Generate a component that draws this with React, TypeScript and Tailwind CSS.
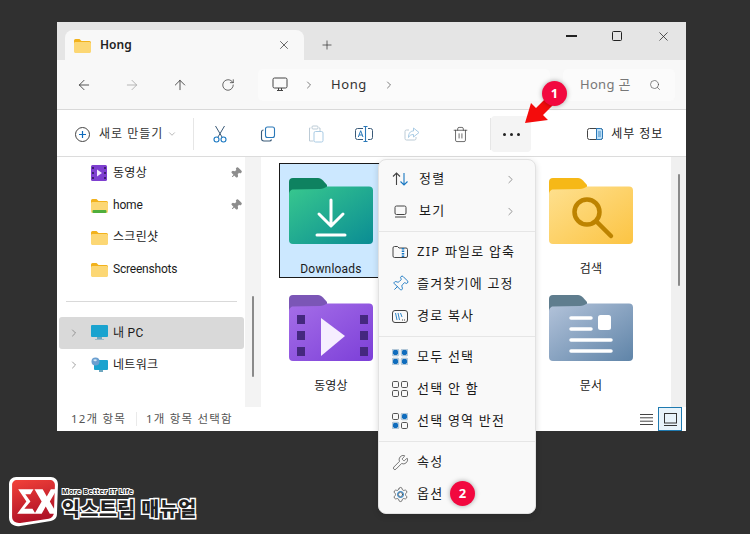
import React from "react";
import {
  ArrowLeft, ArrowRight, ArrowUp, RotateCw, ChevronRight, ChevronDown, X, Plus, Search, Trash2, Wrench, Settings, Pin,
} from "lucide-react";

function SmallFolder({ green }: { green?: boolean }) {
  return (
    <svg width="17" height="15" viewBox="0 0 17 15" className="shrink-0">
      <path d="M0 2.5a1.5 1.5 0 0 1 1.5-1.5h4l2 2h8a1.5 1.5 0 0 1 1.5 1.5V7H0z" fill="#f2b21c" />
      <path d="M0 5.5C0 4.7.7 4 1.5 4h14c.8 0 1.5.7 1.5 1.5v8c0 .8-.7 1.5-1.5 1.5h-14C.7 15 0 14.300 0 13.500z" fill="#fcd774" />
      {green && <rect x="1.500" y="12" width="14" height="3" rx="1" fill="#4fae3c" />}
    </svg>
  );
}

function BigFolder({ id, tab, from, to, children }: { id: string; tab: string; from: string; to: string; children?: React.ReactNode }) {
  return (
    <svg width="84" height="66" viewBox="0 0 84 66" className="shrink-0">
      <defs>
        <linearGradient id={id} x1="0" y1="0" x2="1" y2="1">
          <stop offset="0" stopColor={from} />
          <stop offset="1" stopColor={to} />
        </linearGradient>
      </defs>
      <path d="M0 4a4 4 0 0 1 4-4h25c2 0 3.500 1 5 2.500L38 7v11H0z" fill={tab} />
      <path d="M0 16c0-2 1-3 3-4.500L31 11c3 0 4.500-1 7-2.500h42a4 4 0 0 1 4 4V62a4 4 0 0 1-4 4H4a4 4 0 0 1-4-4z" fill={`url(#${id})`} />
      {children}
    </svg>
  );
}

function Tool({ children, w }: { children: React.ReactNode; w: string }) {
  return <div className={`${w} h-[30px] flex items-center justify-center shrink-0`}>{children}</div>;
}

function TreeRow({ icon, label, pin, latin }: { icon: React.ReactNode; label: string; pin?: boolean; latin?: boolean }) {
  return (
    <div className="h-8 flex items-center pl-[34px] pr-[3px] text-[#1b1b1b]">
      <div className="w-[19px] flex justify-start">{icon}</div>
      <span className={`ml-[3px] flex-1 ${latin ? "tracking-[-0.2px]" : "tracking-[0.3px]"}`}>{label}</span>
      {pin && <Pin size={12} fill="#8d8d8d" stroke="#8d8d8d" className="rotate-45" />}
    </div>
  );
}

function Tile({ icon, label, selected }: { icon: React.ReactNode; label: string; selected?: boolean }) {
  return (
    <div className={`w-[104px] h-[115px] flex flex-col items-center pt-[14px] border ${selected ? "bg-[#cce8ff] border-[#1a1a1a]" : "border-transparent"}`}>
      {icon}
      <span className="mt-[16px] text-[12px] leading-[18px] tracking-[0.2px] text-[#1b1b1b]">{label}</span>
    </div>
  );
}

function MenuRow({ icon, label, arrow, indent }: { icon: React.ReactNode; label: string; arrow?: boolean; indent?: boolean }) {
  return (
    <div className="h-8 flex items-center pl-[11px] pr-[18px] text-[#1b1b1b]">
      <div className="w-5 h-5 flex items-center justify-center shrink-0">{icon}</div>
      <span className={`flex-1 ${indent ? "ml-[9px]" : "ml-[7px]"}`}>{label}</span>
      {arrow && <ChevronRight size={13} stroke="#6f6f6f" strokeWidth={1.3} />}
    </div>
  );
}

function Dots({ on }: { on: boolean[] }) {
  return (
    <svg width="16" height="16" viewBox="0 0 16 16">
      {[[0, 0], [9, 0], [0, 9], [9, 9]].map(([x, y], i) =>
        on[i] ? (
          <g key={i}>
            <rect x={x + 0.3} y={y + 0.3} width="6.400" height="6.400" rx="1" fill="none" stroke="#5f8db0" strokeWidth=".6" />
            <rect x={x + 1} y={y + 1} width="5" height="5" rx="1.400" fill="#0f6cbd" />
          </g>
        ) : (
          <rect key={i} x={x + 0.5} y={y + 0.5} width="6" height="6" rx="1.200" fill="none" stroke="#555" strokeWidth="1" />
        )
      )}
    </svg>
  );
}

function Badge({ n, className }: { n: number; className: string }) {
  return (
    <div className={`absolute w-[25px] h-[25px] rounded-full bg-[#f2083f] text-white text-[13px] font-bold flex items-center justify-center shadow-[0_0_5px_rgba(0,0,0,0.35)] ${className}`}>
      {n}
    </div>
  );
}

export default function App() {
  const ic = { strokeWidth: 1.25 };
  return (
    <div className="relative w-[750px] h-[534px] overflow-hidden bg-[#303030] pt-[22px] pl-[57px] text-[12px] font-['Noto_Sans','Noto_Sans_CJK_KR',sans-serif]">
      <div className="w-[629px] h-[409px] flex flex-col bg-white">
        {/* Tab bar */}
        <div className="h-[38px] shrink-0 bg-[#e5e5e5] flex items-end pl-[8px]">
          <div className="w-[239px] h-[30px] bg-[#f8f8f8] rounded-t-[8px] flex items-center pl-[9px] pr-[13px]">
            <SmallFolder />
            <span className="ml-[9px] flex-1 font-semibold text-[12px] text-[#222]">Hong</span>
            <X size={14} stroke="#333" {...ic} />
          </div>
          <div className="h-[30px] flex items-center ml-[16px]">
            <Plus size={14} stroke="#333" {...ic} />
          </div>
          <div className="flex-1 self-start h-[28px] flex items-center justify-end text-[#222]">
            <div className="w-[46px] flex justify-center"><div className="w-[11px] h-[1.300px] bg-[#222]" /></div>
            <div className="w-[46px] flex justify-center"><div className="w-[10px] h-[10px] border border-[#222] rounded-[1.500px]" /></div>
            <div className="w-[46px] flex justify-center"><X size={15} stroke="#222" strokeWidth={1.2} /></div>
          </div>
        </div>

        {/* Nav bar */}
        <div className="h-[50px] shrink-0 bg-[#f8f8f8] border-b border-[#d9d9d9] flex items-center pl-[19px]">
          <ArrowLeft size={16} stroke="#333" {...ic} />
          <ArrowRight size={16} stroke="#a8a8a8" className="ml-[32px]" {...ic} />
          <ArrowUp size={16} stroke="#333" className="ml-[32px]" {...ic} />
          <RotateCw size={14} stroke="#333" className="ml-[33px]" {...ic} />
          <div className="ml-[23px] w-[292px] h-[32px] bg-[#fbfbfb] rounded-[5px] flex items-center pl-[14px] shrink-0">
            <svg width="16" height="15" viewBox="0 0 16 15" fill="none" stroke="#444" strokeWidth="1">
              <rect x="1" y="1" width="14" height="10" rx="1.500" />
              <path d="M5 13.500h6M6.500 11v2.500M9.500 11v2.500" />
            </svg>
            <ChevronRight size={12} stroke="#333" className="ml-[15px]" {...ic} />
            <span className="ml-[16px] text-[13px] text-[#333] tracking-[0.6px]">Hong</span>
            <ChevronRight size={12} stroke="#333" className="ml-[16px]" {...ic} />
          </div>
          <div className="ml-[13px] w-[112px] h-[32px] bg-[#fbfbfb] rounded-[5px] flex items-center pl-[17px] pr-[14px] justify-between shrink-0">
            <span className="text-[13px] text-[#777] tracking-[0.3px]">Hong 곤</span>
            <Search size={12} stroke="#444" {...ic} />
          </div>
        </div>

        {/* Toolbar */}
        <div className="h-[47px] shrink-0 bg-white border-b border-[#dcdcdc] flex items-center pl-[18px] pt-[2px]">
          <svg width="15" height="15" viewBox="0 0 15 15" fill="none" className="shrink-0">
            <circle cx="7.500" cy="7.500" r="7" stroke="#444" />
            <path d="M7.500 4v7M4 7.500h7" stroke="#0f6cbd" strokeWidth="1.200" />
          </svg>
          <span className="ml-[9px] text-[#333] text-[12px] tracking-[1px]">새로 만들기</span>
          <ChevronDown size={10} stroke="#777" className="ml-[4px]" {...ic} />
          <div className="ml-[16px] w-px h-[32px] bg-[#e6e6e6]" />
          <Tool w="w-[52px]">
            <svg width="14" height="18" viewBox="0 0 14 18" fill="none">
              <path d="M2.500 1l6.500 11M11.500 1 5 12" stroke="#3a5a78" strokeWidth="1" />
              <circle cx="3.500" cy="14.500" r="2.500" stroke="#1a78c2" strokeWidth="1.100" />
              <circle cx="10.500" cy="14.500" r="2.500" stroke="#1a78c2" strokeWidth="1.100" />
            </svg>
          </Tool>
          <Tool w="w-[44px]">
            <svg width="16" height="16" viewBox="0 0 16 16" fill="none">
              <rect x="5.500" y="1" width="9" height="10.500" rx="2" stroke="#2a78b8" strokeWidth="1.100" />
              <path d="M3.500 4A2 2 0 0 0 1.500 6v6.500A2.500 2.500 0 0 0 4 15h5.500a2 2 0 0 0 2-1.500" stroke="#3a5a78" strokeWidth="1.100" />
            </svg>
          </Tool>
          <Tool w="w-[52px]">
            <svg width="16" height="18" viewBox="0 0 16 18" fill="none" stroke="#bccbd6" strokeWidth="1">
              <path d="M2.500 3H1.500v13h4M11 3h1v3" />
              <rect x="4" y="1" width="6" height="3" rx="1" />
              <rect x="6" y="6.500" width="9" height="10.500" rx="1.500" stroke="#a9cbe4" />
            </svg>
          </Tool>
          <Tool w="w-[44px]">
            <svg width="18" height="16" viewBox="0 0 18 16" fill="none">
              <path d="M8 2.500H2.500a2 2 0 0 0-2 2v7a2 2 0 0 0 2 2H8M13 2.500h2.500a2 2 0 0 1 2 2v7a2 2 0 0 1-2 2H13" stroke="#3a5a78" />
              <path d="M10.500.5v15M8.500.5h4M8.500 15.500h4" stroke="#2a78b8" strokeWidth="1.100" />
              <path d="M3.300 11 5.700 4.700 8 11M4.200 9h3" stroke="#2a78b8" strokeWidth="1" />
            </svg>
          </Tool>
          <Tool w="w-[52px]">
            <svg width="16" height="14" viewBox="0 0 16 14" fill="none">
              <path d="M5 3H2.500A1.500 1.500 0 0 0 1 4.500v7A1.500 1.500 0 0 0 2.500 13h8a1.500 1.500 0 0 0 1.500-1.500V10" stroke="#bccbd6" />
              <path d="M9.500 1l5.500 4.500L9.500 10V7.500C7 7.500 5.500 8.500 4.500 10.500c0-4 1.500-6.500 5-6.500z" stroke="#a9cbe4" />
            </svg>
          </Tool>
          <Tool w="w-[44px]"><Trash2 size={17} stroke="#444" strokeWidth={1.1} /></Tool>
          <div className="ml-[8px] w-px h-[32px] bg-[#e6e6e6]" />
          <div className="w-[40px] h-[36px] bg-[#f4f4f4] rounded-[4px] flex items-center justify-center gap-[4px]">
            <div className="w-[3px] h-[3px] rounded-full bg-[#222]" />
            <div className="w-[3px] h-[3px] rounded-full bg-[#222]" />
            <div className="w-[3px] h-[3px] rounded-full bg-[#222]" />
          </div>
          <svg width="16" height="12" viewBox="0 0 16 12" fill="none" className="ml-[56px] shrink-0">
            <rect x=".5" y=".5" width="15" height="11" rx="2" stroke="#444" />
            <path d="M9.500.5h4a2 2 0 0 1 2 2v7a2 2 0 0 1-2 2h-4z" fill="#bfe0f7" stroke="#2a78b8" />
            <path d="M11 4h3M11 6h3M11 8h3" stroke="#2a78b8" strokeWidth=".8" />
          </svg>
          <span className="ml-[8px] text-[12px] text-[#222] tracking-[0.9px] whitespace-nowrap">세부 정보</span>
        </div>

        {/* Main */}
        <div className="flex-1 flex min-h-0">
          <div className="w-[188px] shrink-0 text-[12px] font-['Roboto','Noto_Sans_CJK_KR',sans-serif]">
            <TreeRow
              label="동영상"
              pin
              icon={
                <svg width="16" height="16" viewBox="0 0 16 16">
                  <rect width="16" height="16" rx="1.500" fill="#7e3fd0" />
                  <path d="M1 2h2v2H1zM1 7h2v2H1zM1 12h2v2H1zM13 2h2v2h-2zM13 7h2v2h-2zM13 12h2v2h-2z" fill="#3e1f70" />
                  <path d="M6 4.500 11 8l-5 3.500z" fill="#f3e8ff" />
                </svg>
              }
            />
            <TreeRow label="home" pin latin icon={<SmallFolder green />} />
            <TreeRow label="스크린샷" icon={<SmallFolder />} />
            <TreeRow label="Screenshots" latin icon={<SmallFolder />} />
            <div className="mt-[16px] ml-[9px] mr-[8px] h-px bg-[#d9d9d9]" />
            <div className="mt-[15px] ml-[2px] mr-px h-8 bg-[#d9d9d9] rounded-[3px] flex items-center pl-[9px] text-[#1b1b1b]">
              <ChevronRight size={12} stroke="#666" {...ic} />
              <svg width="17" height="16" viewBox="0 0 17 16" className="ml-[11px]">
                <rect width="17" height="12" rx="1" fill="#1aa3cf" />
                <rect x="6" y="12" width="5" height="2" fill="#6fa7bf" />
                <rect x="4" y="14" width="9" height="1" fill="#9bb9c9" />
              </svg>
              <span className="ml-[5px] tracking-[0.3px]">내 PC</span>
            </div>
            <div className="h-8 flex items-center pl-[11px] text-[#1b1b1b]">
              <ChevronRight size={12} stroke="#666" {...ic} />
              <svg width="17" height="16" viewBox="0 0 17 16" className="ml-[11px]">
                <rect x="3" y="3" width="14" height="10" rx="1" fill="#1aa3cf" />
                <rect x="8" y="13" width="4" height="2" fill="#6fa7bf" />
                <circle cx="4.500" cy="4.500" r="4" fill="#6b9fd0" />
                <path d="M2 3c1.500-1 3-1 4 0-1 1.500-2 2-4 0z" fill="#d6e8f5" />
              </svg>
              <span className="ml-[5px] tracking-[0.3px]">네트워크</span>
            </div>
          </div>
          {/* Sidebar scrollbar */}
          <div className="w-[16px] shrink-0 bg-[#f3f3f3] pt-[139px] flex justify-center">
            <div className="w-[2px] h-[81px] rounded bg-[#8a8a8a]" />
          </div>
          {/* Tiles */}
          <div className="flex-1 grid grid-cols-[130px_130px_130px] auto-rows-[117px] pl-[18px] pt-[6px] bg-white font-['Roboto','Noto_Sans_CJK_KR',sans-serif]">
            <Tile
              selected
              label="Downloads"
              icon={
                <BigFolder id="dl" tab="#0e8260" from="#38c88e" to="#0a8c94">
                  <path d="M42 22v25M30 36l12 12 12-12M28 57h28" stroke="#fff" strokeWidth="3" fill="none" strokeLinecap="round" strokeLinejoin="round" />
                </BigFolder>
              }
            />
            <div />
            <Tile
              label="검색"
              icon={
                <BigFolder id="sr" tab="#f6b817" from="#fee08f" to="#fcc443">
                  <circle cx="38" cy="34" r="12.500" stroke="#bd8300" strokeWidth="4.500" fill="none" />
                  <path d="M48 44l14 14" stroke="#bd8300" strokeWidth="4.500" strokeLinecap="round" />
                </BigFolder>
              }
            />
            <Tile
              label="동영상"
              icon={
                <BigFolder id="vd" tab="#7b56b6" from="#a56ee8" to="#7c3fd8">
                  <path d="M8 20h8v9H8zM8 36h8v9H8zM8 52h8v9H8zM71 20h8v9h-8zM71 36h8v9h-8zM71 52h8v9h-8z" fill="#45287f" />
                  <path d="M32 23l24 18-24 20z" fill="#f6eeff" />
                </BigFolder>
              }
            />
            <div />
            <Tile
              label="문서"
              icon={
                <BigFolder id="dc" tab="#5f7d8e" from="#b3c3da" to="#5f84a8">
                  <path d="M22 23h20M22 34h20M22 45h40M22 56h40" stroke="#fff" strokeWidth="3.500" strokeLinecap="round" />
                  <rect x="49" y="20" width="13" height="15" rx="2.500" fill="#fff" />
                </BigFolder>
              }
            />
          </div>
          {/* Right scrollbar */}
          <div className="w-[15px] shrink-0 bg-[#f0f0f0] pt-[17px] flex justify-center">
            <div className="w-[2px] h-[112px] rounded bg-[#8a8a8a]" />
          </div>
        </div>

        {/* Status bar */}
        <div className="h-[24px] shrink-0 bg-white flex items-center pl-[14px] pr-[4px] text-[11.500px] text-[#555] tracking-[1.2px]">
          <span className="w-[65px]">12개 항목</span>
          <div className="w-px h-[14px] bg-[#eaeaea]" />
          <span className="ml-[9px] flex-1">1개 항목 선택함</span>
          <svg width="13" height="11" viewBox="0 0 13 11" stroke="#444" strokeWidth="1">
            <path d="M0 .5h13M0 3.800h13M0 7.200h13M0 10.500h13" />
          </svg>
          <div className="ml-[5px] w-[24px] h-[24px] bg-[#e8f3fa] border border-[#1f7ab0] flex items-center justify-center">
            <svg width="13" height="13" viewBox="0 0 13 13" fill="none" stroke="#333" strokeWidth="1">
              <rect x=".5" y=".5" width="12" height="9.500" />
              <path d="M0 12.500h13" />
            </svg>
          </div>
        </div>
      </div>

      {/* Context menu */}
      <div className="absolute left-[378px] top-[159px] w-[158px] h-[355px] bg-[#f9f9f9] rounded-[8px] border border-[#e2e2e2] pt-[3px] text-[13px] tracking-[1.2px] whitespace-nowrap shadow-[0_2px_6px_rgba(0,0,0,0.15)]">
        <MenuRow
          indent
          arrow
          label="정렬"
          icon={
            <svg width="17" height="14" viewBox="0 0 17 14" fill="none" strokeWidth="1.100">
              <path d="M4.500 13V1M1 4.500 4.500 1 8 4.500" stroke="#444" />
              <path d="M12 1v12M8.500 9.500 12 13l3.500-3.500" stroke="#1a78c2" />
            </svg>
          }
        />
        <MenuRow
          indent
          arrow
          label="보기"
          icon={
            <svg width="13" height="13" viewBox="0 0 13 13" fill="none" stroke="#444">
              <rect x="1" y="1" width="11" height="8.500" rx="1.500" />
              <path d="M1 12h11" />
            </svg>
          }
        />
        <div className="my-[4px] h-px bg-[#e6e6e6]" />
        <MenuRow
          label="ZIP 파일로 압축"
          icon={
            <svg width="16" height="14" viewBox="0 0 16 14" fill="none">
              <path d="M1 3a1.500 1.500 0 0 1 1.500-1.500h3L7 3h7a1.500 1.500 0 0 1 1.500 1.500V11A1.500 1.500 0 0 1 14 12.500H2.500A1.500 1.500 0 0 1 1 11z" stroke="#444" />
              <path d="M11 3v9.500" stroke="#1a78c2" strokeWidth="2.500" strokeDasharray="1.500 1" />
            </svg>
          }
        />
        <MenuRow
          label="즐겨찾기에 고정"
          icon={<Pin size={18} stroke="#1a78c2" strokeWidth={1.2} className="rotate-45" />}
        />
        <MenuRow
          label="경로 복사"
          icon={
            <svg width="16" height="13" viewBox="0 0 16 13" fill="none" stroke="#444">
              <rect x=".5" y=".5" width="15" height="12" rx="2.500" />
              <path d="M3.500 3l1.500 7M6 3l1.500 7M8.500 3 10 7" stroke="#1a78c2" strokeWidth=".9" />
              <path d="M10 10h3.500" strokeDasharray="1 1" />
            </svg>
          }
        />
        <div className="my-[4px] h-px bg-[#e6e6e6]" />
        <MenuRow label="모두 선택" icon={<Dots on={[true, true, true, true]} />} />
        <MenuRow label="선택 안 함" icon={<Dots on={[false, false, false, false]} />} />
        <MenuRow label="선택 영역 반전" icon={<Dots on={[false, true, true, false]} />} />
        <div className="my-[4px] h-px bg-[#e6e6e6]" />
        <MenuRow label="속성" icon={<Wrench size={17} stroke="#444" strokeWidth={1} />} />
        <MenuRow
          label="옵션"
          icon={
            <span className="relative flex">
              <Settings size={17} stroke="#444" strokeWidth={1} />
              <span className="absolute left-[5px] top-[5px] w-[7px] h-[7px] rounded-full border border-[#1a78c2]" />
            </span>
          }
        />
      </div>

      {/* Annotations */}
      <svg className="absolute left-[520px] top-[90px]" width="40" height="40" viewBox="0 0 40 40">
        <path d="M5 33 11 13l5 5 10-10 7 7-10 10 5 5z" fill="#f40c0c" />
      </svg>
      <Badge n={1} className="left-[542px] top-[81px]" />
      <Badge n={2} className="left-[450px] top-[481px]" />

      {/* Logo */}
      <div className="absolute left-[8px] top-[476px] flex items-start">
        <svg width="51" height="51" viewBox="0 0 50 50" className="shrink-0">
          <defs>
            <linearGradient id="lg" x1="0" y1="0" x2="0.300" y2="1">
              <stop offset="0" stopColor="#f2423a" />
              <stop offset="1" stopColor="#b01226" />
            </linearGradient>
          </defs>
          <path d="M8 1h34c4 0 7 3 7 7l-1 29c0 4-2 6-6 7L12 49c-6 1-11-2-11-8V8c0-4 3-7 7-7z" fill="#fff" />
          <path d="M9 4h32c3 0 5 2 5 5l-1 27c0 3-2 5-5 6L12 46c-4 .5-8-1.500-8-6V9c0-3 2-5 5-5z" fill="url(#lg)" />
          <path d="M10 13h15l-3 5h-5l5 7-6 7h8l3 5H9l9-12zM26 13h8l4 7 4-7h6l-7 12 7 12h-7l-4-7-4 7h-7l7-12z" fill="#fff" />
        </svg>
        <div className="ml-[3px] mt-[12px] flex flex-col whitespace-nowrap">
          <span className="text-[7px] leading-[8px] font-bold text-[#222] tracking-[0.3px] [-webkit-text-stroke:2px_white] [paint-order:stroke_fill]">More Better IT Life</span>
          <span className="mt-[3px] text-[19.500px] leading-[20px] font-black text-[#222] tracking-[0.5px] [-webkit-text-stroke:3px_white] [paint-order:stroke_fill]">익스트림 매뉴얼</span>
        </div>
      </div>
    </div>
  );
}
